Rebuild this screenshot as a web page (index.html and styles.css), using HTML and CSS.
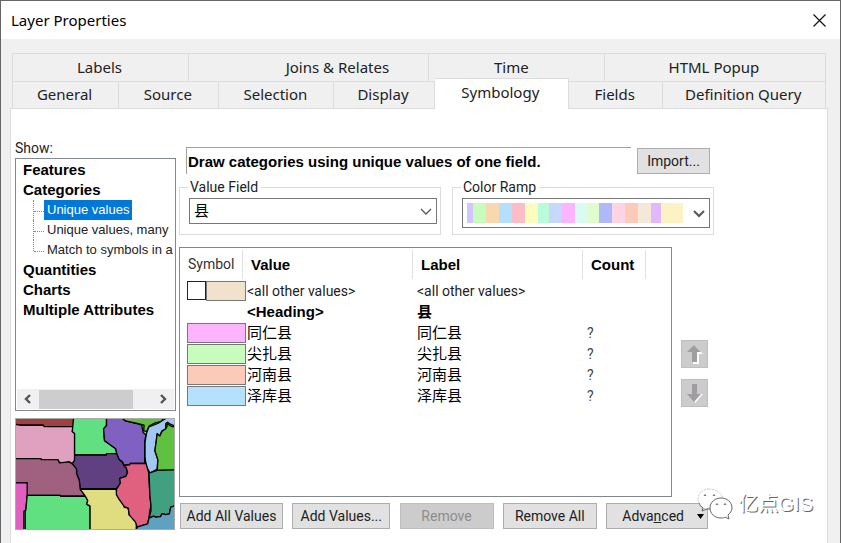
FILE: index.html
```html
<!DOCTYPE html>
<html lang="en">
<head>
  <meta charset="UTF-8">
  <meta name="viewport" content="width=device-width, initial-scale=1.0">
  <title>Layer Properties</title>
  <link rel="stylesheet" href="styles.css">
</head>
<body>
  <div class="dialog">
    <header class="titlebar">
      <h1>Layer Properties</h1>
      <button type="button" class="close" aria-label="Close">
        <svg width="13" height="13" viewBox="0 0 13 13"><path d="M.5 .5l12 12M12.5 .5l-12 12" fill="none" stroke="#111" stroke-width="1.2"/></svg>
      </button>
    </header>

    <nav class="tabs" role="tablist">
      <div class="tab-row">
        <button type="button" role="tab" class="tab w176">Labels</button>
        <button type="button" role="tab" class="tab w241 joins">Joins &amp; Relates</button>
        <button type="button" role="tab" class="tab w176 time">Time</button>
        <button type="button" role="tab" class="tab w222">HTML Popup</button>
      </div>
      <div class="tab-row front">
        <button type="button" role="tab" class="tab w106">General</button>
        <button type="button" role="tab" class="tab w100">Source</button>
        <button type="button" role="tab" class="tab w115">Selection</button>
        <button type="button" role="tab" class="tab w100">Display</button>
        <button type="button" role="tab" class="tab w135 active" aria-selected="true">Symbology</button>
        <button type="button" role="tab" class="tab w94">Fields</button>
        <button type="button" role="tab" class="tab w164">Definition Query</button>
      </div>
    </nav>

    <main class="panel">
      <aside class="side">
        <p class="show" id="show">Show:</p>
        <div class="tree-box">
          <ul class="tree" aria-labelledby="show">
            <li><a href="#features">Features</a></li>
            <li><a href="#categories">Categories</a>
              <ul class="branch">
                <li><a href="#unique" class="selected">Unique values</a></li>
                <li><a href="#many">Unique values, many</a></li>
                <li><a href="#match">Match to symbols in a</a></li>
              </ul>
            </li>
            <li><a href="#quantities">Quantities</a></li>
            <li><a href="#charts">Charts</a></li>
            <li><a href="#multiple">Multiple Attributes</a></li>
          </ul>
          <div class="scrollbar">
            <svg width="9" height="10" viewBox="0 0 9 10"><path d="M7 1L3 5l4 4" fill="none" stroke="#555" stroke-width="2.4"/></svg>
            <span class="thumb"></span>
            <svg width="9" height="10" viewBox="0 0 9 10"><path d="M2 1l4 4-4 4" fill="none" stroke="#555" stroke-width="2.4"/></svg>
          </div>
        </div>
        <svg class="map" viewBox="45 54 480 336" preserveAspectRatio="none" stroke="#000" stroke-width="4" stroke-linejoin="round">
          <rect x="45" y="54" width="480" height="336" fill="#60e080" stroke="none"/>
          <path fill="#a04040" d="M40 50H220V77H130L128 73H58L40 70Z"/>
          <path fill="#e0a0c0" d="M40 70L58 73H128L130 77H220L216 92L223 98V180L216 191L206 185L188 189L176 186L172 178H122L120 175H40Z"/>
          <path fill="#60e080" d="M220 50H320V74L311 84L314 120L330 132L348 145L351 160L320 161V164H223V98L216 92Z"/>
          <path fill="#8060c0" d="M320 50H366L378 60L410 67L427 73L431 95L440 102L436 124V190H392L390 194H372L368 184L358 178L351 160L348 145L330 132L314 120L311 84L320 74Z"/>
          <path fill="#60c040" d="M366 50H492L488 62L470 65L450 75L442 92L433 90L434 73L410 67L378 60Z"/>
          <path fill="#a0c8f0" d="M442 96L449 78L470 70L480 65L491 58L504 50H530V77L512 69L506 64L500 68L500 84L488 91L482 106L474 99L471 122L467 151L476 178L474 207L452 219L441 199L437 171L437 124Z"/>
          <path fill="#60c040" d="M500 84L504 76L503 68L518 77L530 77V211L474 211L476 178L467 151L471 122L474 99L482 106L489 91Z"/>
          <path fill="#604080" d="M223 164H320V160L351 160L358 178L368 186L372 194L380 203L384 217L379 229L361 235L363 251L350 267H240L237 240L229 221V207L221 197L216 191L223 180Z"/>
          <path fill="#a06080" d="M40 175H120L122 178H172L177 188L206 185L216 191L221 197L229 207V221L237 240L240 267L248 279L256 290H181L179 287H79V249H40Z"/>
          <path fill="#e060c0" d="M40 249H79V287L75 332L69 336V396H40Z"/>
          <path fill="#60e080" d="M79 287H179L181 290H256L263 303L260 314L270 320V396H73V336L75 332Z"/>
          <path fill="#e0dc80" d="M240 269H350L351 284L359 299L374 314L374 324L386 326L389 347L401 357L411 371L410 396H270V320L260 314L263 303L254 287L248 279Z"/>
          <path fill="#e06080" d="M372 196L390 194L392 190H440L448 218L452 290L455 317L451 338L449 357L445 374L427 380L413 384L408 369L389 347L386 326L374 322L358 299L350 285V269L362 250L360 235L379 229L384 217L380 203Z"/>
          <path fill="#40a080" d="M449 219L474 211L530 209V319L515 323L511 344L500 346L489 343L484 352L470 354L462 351L449 357L455 335V317L452 290Z"/>
          <path fill="#60a0c0" d="M410 396L413 384L427 380L445 374L449 357L462 351L470 354L484 352L489 343L500 346L511 344L515 323L530 319V396Z"/>
        </svg>
      </aside>

      <section class="content">
        <div class="intro">
          <h2>Draw categories using unique values of one field.</h2>
          <button type="button" class="btn import">Import...</button>
        </div>

        <div class="groups">
          <fieldset>
            <legend><label for="valueField">Value Field</label></legend>
            <div class="combo">
              <select id="valueField"><option>县</option></select>
              <svg width="12" height="8" viewBox="0 0 12 8"><path d="M1 1l5 5 5-5" fill="none" stroke="#555" stroke-width="1.3"/></svg>
            </div>
          </fieldset>
          <fieldset>
            <legend><label for="colorRamp">Color Ramp</label></legend>
            <div class="combo">
              <select id="colorRamp" class="ramp"><option></option></select>
              <svg class="low" width="12" height="8" viewBox="0 0 12 8"><path d="M1 1l5 5 5-5" fill="none" stroke="#555" stroke-width="2"/></svg>
            </div>
          </fieldset>
        </div>

        <div class="values">
          <div class="table-box">
            <table>
              <colgroup>
                <col class="c-symbol"><col class="c-text"><col class="c-text"><col class="c-count"><col>
              </colgroup>
              <thead>
                <tr>
                  <th class="symbol">Symbol</th>
                  <th>Value</th>
                  <th>Label</th>
                  <th>Count</th>
                  <td></td>
                </tr>
              </thead>
              <tbody>
                <tr>
                  <td><div class="other"><input type="checkbox" aria-label="Show all other values"><span class="swatch sand"></span></div></td>
                  <td>&lt;all other values&gt;</td>
                  <td>&lt;all other values&gt;</td>
                  <td></td>
                  <td></td>
                </tr>
                <tr class="heading">
                  <td></td>
                  <td>&lt;Heading&gt;</td>
                  <td>县</td>
                  <td></td>
                  <td></td>
                </tr>
                <tr class="item">
                  <td><span class="swatch pink"></span></td>
                  <td>同仁县</td>
                  <td>同仁县</td>
                  <td>?</td>
                  <td></td>
                </tr>
                <tr class="item">
                  <td><span class="swatch green"></span></td>
                  <td>尖扎县</td>
                  <td>尖扎县</td>
                  <td>?</td>
                  <td></td>
                </tr>
                <tr class="item">
                  <td><span class="swatch salmon"></span></td>
                  <td>河南县</td>
                  <td>河南县</td>
                  <td>?</td>
                  <td></td>
                </tr>
                <tr class="item">
                  <td><span class="swatch blue"></span></td>
                  <td>泽库县</td>
                  <td>泽库县</td>
                  <td>?</td>
                  <td></td>
                </tr>
              </tbody>
            </table>
          </div>
          <div class="order">
            <button type="button" disabled aria-label="Move up">
              <svg width="18" height="20" viewBox="0 0 18 20"><path d="M9 2l8 8h-4v10H7V10h3z" fill="#fff"/><path d="M8 1l7 7h-4v10H6V8H1z" fill="#a09ea0"/></svg>
            </button>
            <button type="button" disabled aria-label="Move down">
              <svg width="18" height="20" viewBox="0 0 18 20"><path d="M9 20l8-9h-3l-6 7z" fill="#fff"/><path d="M8 19l-7-8h5V1h5v10h4z" fill="#a09ea0"/></svg>
            </button>
          </div>
        </div>

        <div class="actions">
          <button type="button" class="btn add-all">Add All Values</button>
          <button type="button" class="btn add">Add Values...</button>
          <button type="button" class="btn remove" disabled>Remove</button>
          <button type="button" class="btn remove-all">Remove All</button>
          <button type="button" class="btn advanced"><span>Adva<u>n</u>ced</span>
            <svg width="7" height="5" viewBox="0 0 7 5"><path d="M0 0h7L3.500 5z" fill="#000"/></svg>
          </button>
        </div>
      </section>
    </main>

    <div class="mark">
      <svg width="36" height="32" viewBox="0 0 36 32" fill="#fff" stroke-width="1">
        <path stroke="#ccc" stroke-dasharray="2 1" d="M12 1C5 1 1 6 1 11c0 4 2 7 5 9l3 1 3-1c8 1 14-3 14-10C24 5 19 1 12 1z"/>
        <path stroke="#666" d="M24 10c-6 0-11 4-11 10s5 10 11 10c2 0 3 0 4-1l4 2-1-4c2-2 4-4 4-7 0-6-5-10-11-10z"/>
        <path fill="none" stroke="#666" d="M2 15c1 2 2 4 4 5l-1 3 5-2h3M7 8q1-3 2 0M16 8q1-3 2 0M19 17q1-3 2 0M27 17q1-3 2 0"/>
      </svg>
      <span>亿点GIS</span>
    </div>
  </div>
</body>
</html>
```

FILE: styles.css
```css
:root {
  --face: #f0f0f0;
  --line: #dcdcdc;
  --frame: #828790;
  --button: #e1e1e1;
  --highlight: #0078d7;
  --bold: bold 15px "Liberation Sans", "Noto Sans CJK SC", sans-serif;
}

* {
  box-sizing: border-box;
}

body {
  margin: 0;
  background: var(--face);
  color: #222;
  font-family: Roboto, "Noto Sans CJK SC", sans-serif;
  font-size: 14px;
}

button,
select {
  font: inherit;
  color: inherit;
}

.dialog {
  position: relative;
  display: flex;
  flex-direction: column;
  min-height: 100vh;
  border: 1px solid #666;
  border-bottom: none;
}

.titlebar {
  display: flex;
  align-items: center;
  justify-content: space-between;
  height: 38px;
  padding: 0 14px 0 10px;
  background: #fff;
}

.titlebar h1 {
  margin: 0;
  color: #000;
  font: 15px "Noto Sans", sans-serif;
}

.close {
  display: flex;
  padding: 0;
  border: none;
  background: none;
}

/* tabs */
.tabs {
  padding: 14px 14px 0 11px;
}

.tab-row {
  display: flex;
  height: 28px;
  border: 1px solid var(--line);
  border-bottom: none;
}

.tab-row.front {
  height: 27px;
}

.tab {
  flex: 1 1 0;
  min-width: 0;
  padding: 0 2px 2px 0;
  border: none;
  border-right: 1px solid var(--line);
  background: var(--face);
  font: 15px "Noto Sans", sans-serif;
  white-space: nowrap;
}

.tab:last-child {
  border-right: none;
}

.w94 { flex-grow: 94; }
.w100 { flex-grow: 100; }
.w106 { flex-grow: 106; }
.w115 { flex-grow: 115; }
.w135 { flex-grow: 135; }
.w164 { flex-grow: 164; }
.w176 { flex-grow: 176; }
.w222 { flex-grow: 222; }
.w241 { flex-grow: 241; }

.joins {
  text-indent: 60px;
}

.time {
  text-indent: -8px;
}

.tab.active {
  z-index: 1;
  margin: -4px 0 -1px;
  padding-bottom: 4px;
  border-top: 1px solid var(--line);
  background: #fff;
}

/* page */
.panel {
  display: flex;
  flex: 1;
  gap: 3px;
  margin: 0 12px 0 9px;
  padding: 30px 113px 13px 4px;
  border: 1px solid var(--line);
  border-bottom: none;
  background: #fff;
}

.side {
  flex: 0 0 161px;
  min-width: 0;
}

.show {
  margin: 0;
  height: 19px;
  line-height: 18px;
}

.tree-box {
  display: flex;
  flex-direction: column;
  justify-content: space-between;
  height: 253px;
  padding: 1px;
  overflow: hidden;
  border: 1px solid var(--frame);
}

.tree,
.branch {
  margin: 0;
  padding: 0;
  list-style: none;
  white-space: nowrap;
}

.tree {
  padding-left: 6px;
  font: var(--bold);
  line-height: 20px;
}

.tree a {
  color: #000;
  text-decoration: none;
}

.branch {
  margin-left: 10px;
  font: 13px "Liberation Sans", sans-serif;
  line-height: 20px;
}

.branch li {
  display: flex;
  height: 20px;
  border-left: 1px dotted #888;
}

.branch li:last-child {
  height: 11px;
  margin-bottom: 9px;
}

.branch li::before {
  content: "";
  flex: 0 0 10px;
  height: 11px;
  border-bottom: 1px dotted #888;
}

.branch a {
  height: 20px;
  padding: 0 3px;
  color: #222;
}

.branch .selected {
  background: var(--highlight);
  color: #fff;
}

.scrollbar {
  display: flex;
  align-items: center;
  height: 20px;
  padding: 0 6px;
  background: var(--face);
}

.thumb {
  width: 94px;
  height: 19px;
  margin: 0 auto 0 7px;
  background: #cdcdcd;
}

.map {
  display: block;
  width: 160px;
  height: 112px;
  margin-top: 7px;
  border: 1px solid #aaa;
}

.content {
  flex: 1;
  min-width: 0;
  padding-top: 8px;
}

.intro {
  display: flex;
  gap: 6px;
  padding: 0 4px 0 7px;
}

.intro h2 {
  flex: 1;
  height: 27px;
  margin: 0;
  padding-left: 1px;
  border-top: 1px solid #a0a0a0;
  border-left: 1px solid #a0a0a0;
  color: #000;
  font: var(--bold);
  line-height: 27px;
}

.btn {
  height: 26px;
  padding: 0;
  border: 1px solid #adadad;
  background: var(--button);
  white-space: nowrap;
}

.btn:disabled {
  border-color: #bfbfbf;
  background: #ccc;
  color: #8d8d8d;
}

.import {
  flex: 0 0 73px;
  margin-top: 1px;
}

.groups {
  display: flex;
  gap: 11px;
  margin-top: 5px;
}

fieldset {
  flex: 1;
  min-width: 0;
  height: 56px;
  margin: 0;
  padding: 3px 3px 0 9px;
  border: 1px solid var(--line);
}

legend {
  height: 16px;
  margin-left: -1px;
  padding: 0 3px 0 2px;
  line-height: 16px;
}

.combo {
  position: relative;
}

.combo select {
  display: block;
  width: 100%;
  height: 26px;
  padding: 0 4px;
  border: 1px solid #777;
  border-radius: 0;
  background-color: #fff;
  color: #000;
  font-size: 15px;
  appearance: none;
}

.combo svg {
  position: absolute;
  top: 10px;
  right: 5px;
  pointer-events: none;
}

.combo .low {
  top: 12px;
}

.combo .ramp {
  height: 30px;
  background-image: linear-gradient(to right,
    #d4c4fc 0 3%, #c8fcbc 3% 9%, #f8d8b0 9% 15%, #b4e0fc 15% 21%,
    #fcbcc8 21% 27%, #fcfcbc 27% 33%, #b8fcdc 33% 38%, #c8d8fc 38% 44%,
    #fcb4fc 44% 50%, #d8fcf0 50% 56%, #e0fccc 56% 61%, #b0b8fc 61% 67%,
    #fcd4e4 67% 73%, #fccab8 73% 79%, #f6e8d8 79% 85%, #e2b8fc 85% 90%,
    #fcf2c4 90%);
  background-position: 4px 4px;
  background-repeat: no-repeat;
  background-size: calc(100% - 30px) 20px;
}

/* value list */
.values {
  display: flex;
  gap: 9px;
  margin-top: 12px;
  padding-right: 6px;
}

.table-box {
  flex: 1;
  height: 250px;
  border: 1px solid var(--frame);
}

table {
  width: 100%;
  table-layout: fixed;
  border-collapse: collapse;
}

.c-symbol { width: 63px; }
.c-text { width: 170px; }
.c-count { width: 63px; }

th,
td {
  height: 21px;
  padding: 0 0 0 4px;
  line-height: 20px;
  text-align: left;
  white-space: nowrap;
}

th {
  height: 32px;
  padding-left: 8px;
  background: linear-gradient(#e0e0e0, #e0e0e0) right 2px / 1px 29px no-repeat;
  color: #000;
  font: var(--bold);
}

th.symbol {
  color: #333;
  font: 14px Roboto, sans-serif;
}

td:first-child {
  padding-left: 7px;
}

.heading td {
  color: #000;
  font: var(--bold);
  line-height: 20px;
}

.item td {
  color: #000;
  font-size: 15px;
}

.item td:nth-child(4) {
  color: #444;
  font-size: 14px;
}

.swatch {
  display: block;
  width: 59px;
  height: 20px;
  border: 1px solid #777;
}

.other {
  display: flex;
  width: 59px;
}

.other input {
  flex: 0 0 19px;
  height: 19px;
  margin: 0;
  border: 1px solid #222;
  background: #fff;
  appearance: none;
}

.other .swatch {
  width: 40px;
}

.sand { background: #f0e2cc; }
.pink { background: #fcb4fc; }
.green { background: #c8fcbc; }
.salmon { background: #fccab8; }
.blue { background: #b4e2fc; }

.order {
  display: flex;
  flex-direction: column;
  gap: 11px;
  padding-top: 93px;
}

.order button {
  display: flex;
  align-items: center;
  justify-content: center;
  width: 27px;
  height: 28px;
  padding: 0;
  border: 1px solid #bfbfbf;
  background: #ccc;
}

.actions {
  display: flex;
  justify-content: space-between;
  margin-top: 6px;
  padding: 0 6px 0 1px;
}

.add-all { flex: 0 0 103px; }
.add { flex: 0 0 98px; }
.remove { flex: 0 0 94px; }
.remove-all { flex: 0 0 94px; }

.advanced {
  display: flex;
  flex: 0 0 102px;
  align-items: center;
  justify-content: flex-end;
  gap: 13px;
  padding-right: 3px;
}

/* account mark over the lower right corner */
.mark {
  position: absolute;
  right: 27px;
  bottom: 23px;
  display: flex;
  align-items: center;
  gap: 6px;
  color: #fff;
  font: 20px "Liberation Sans", "Noto Sans CJK SC", sans-serif;
  line-height: 32px;
  text-shadow: 1px 1px 0 #666;
}
```
